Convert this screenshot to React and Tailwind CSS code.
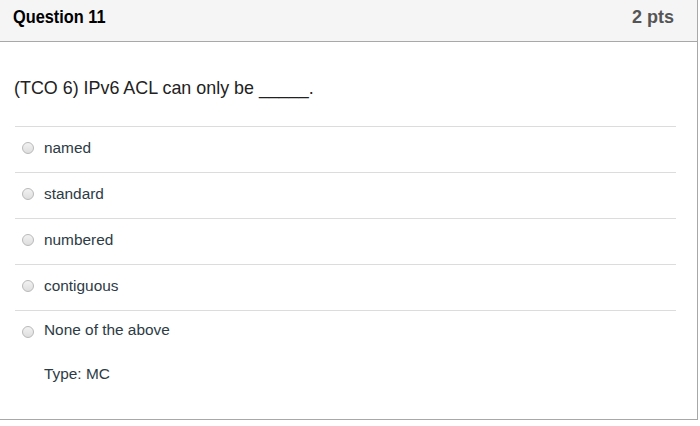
import React from 'react';

const options = ['named', 'standard', 'numbered', 'contiguous'];

const Radio = () => (
  <span className="inline-block w-[12px] h-[12px] rounded-full border border-[#b9b9b9] bg-gradient-to-b from-[#f2f2f2] to-[#dedede] shrink-0" />
);

export default function App() {
  return (
    <div className="w-[700px] h-[426px] bg-white font-['Liberation_Sans',Arial,sans-serif]">
      <div className="w-[698px] border-r border-b border-[#a8a8a8] bg-white">
        {/* header */}
        <div className="h-[42px] bg-[#f5f5f5] border-b border-[#a8a8a8] flex justify-between items-start pt-[5px] pl-[13px] pr-[23px]">
          <span className="inline-block origin-left scale-x-[0.86] text-[19px] leading-[24px] font-bold text-black">Question 11</span>
          <span className="text-[18px] leading-[24px] font-bold text-[#555]">2 pts</span>
        </div>

        {/* body */}
        <div className="pt-[36px] pb-[35px]">
          <p className="pl-[14px] text-[17.9px] leading-[20px] text-[#222]">
            (TCO 6) IPv6 ACL can only be _____.
          </p>

          <div className="mt-[28px] ml-[15px] w-[661px]">
            {options.map((o) => (
              <div key={o} className="h-[46px] border-t border-[#dcdcdc] flex items-center pl-[7px] pb-[3px] gap-[10px]">
                <Radio />
                <span className="text-[15.4px] leading-[20px] text-[#2d3b45]">{o}</span>
              </div>
            ))}
            <div className="border-t border-[#dcdcdc] flex items-center pl-[7px] pt-[9px] gap-[10px]">
              <span className="mt-[3px] flex"><Radio /></span>
              <span className="text-[15.4px] leading-[20px] text-[#2d3b45]">None of the above</span>
            </div>
            <div className="mt-[24px] pl-[29px] text-[15.4px] leading-[20px] text-[#2d3b45]">Type: MC</div>
          </div>
        </div>
      </div>
    </div>
  );
}
